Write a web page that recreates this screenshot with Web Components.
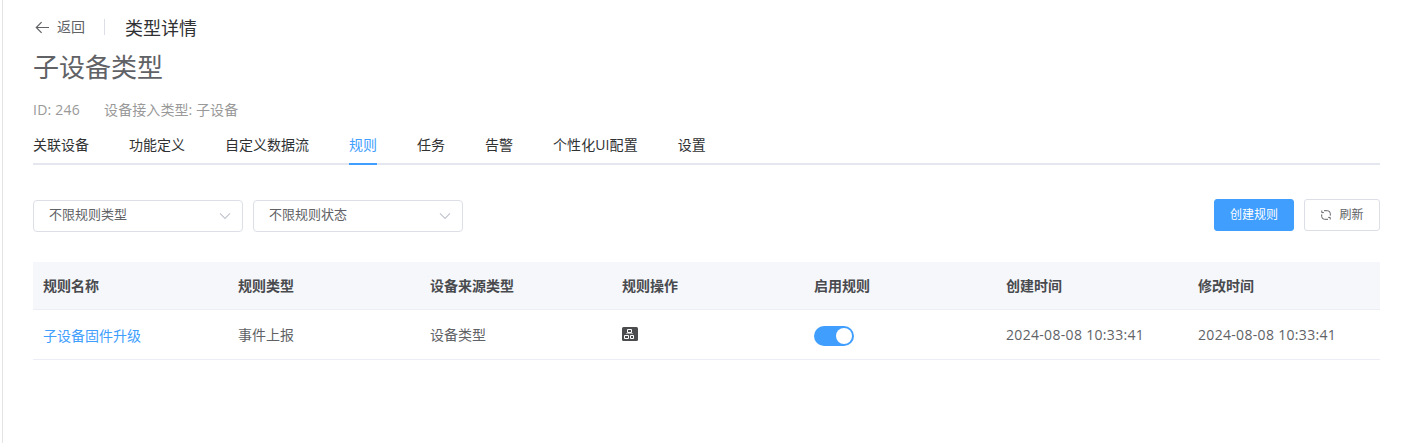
<!DOCTYPE html>
<html lang="zh-CN">
<head>
<meta charset="utf-8">
<title>类型详情</title>
<style>
html,body{margin:0;height:100%;overflow:hidden;background:#fff}
body{font-family:"Open Sans","Noto Sans CJK SC",sans-serif;font-size:14px;color:#606266}
</style>
</head>
<body>
<type-detail></type-detail>
<script>
const define = (name, css, html) => customElements.define(name, class extends HTMLElement {
  constructor() {
    super();
    this.attachShadow({ mode: 'open' }).innerHTML = `<style>*{box-sizing:border-box}:host{box-sizing:border-box;white-space:nowrap}${css}</style>${html}`;
  }
});

define('page-header', `
:host{display:flex;align-items:center;height:24px;line-height:24px}
.back{display:flex;align-items:center;padding-left:2px;height:22px;line-height:22px;margin-bottom:2px}
svg{margin-right:7px;display:block}
i{width:1px;height:16px;background:#dcdfe6;margin:0 20px 2px 19px}
.title{font-size:18px;color:#303133}`,
`<div class="back"><svg width="15" height="14" viewBox="0 0 15 14" fill="none" stroke="#606266" stroke-width="1.2"><path d="M14 7.5H1.5M6.6 2.2 1.3 7.5 6.6 12.8"/></svg><slot name="back"></slot></div><i></i><div class="title"><slot></slot></div>`);

define('tab-bar', `:host{display:flex;gap:40px;height:36px;border-bottom:2px solid #e4e7ed;color:#303133}`, `<slot></slot>`);
define('tab-item', `
:host{display:block;height:36px;line-height:32px;border-bottom:2px solid transparent}
:host([active]){color:#409eff;border-color:#409eff}
:host([latin]){letter-spacing:.1px}`, `<slot></slot>`);

define('select-box', `
:host{display:flex;align-items:center;justify-content:space-between;width:210px;height:32px;border:1px solid #dcdfe6;border-radius:4px;padding:0 11px 0 15px;font-size:13px;line-height:26px}
span{height:30px}`,
`<span><slot></slot></span><svg width="12" height="8" viewBox="0 0 12 8" fill="none" stroke="#c0c4cc" stroke-width="1.1"><path d="m1 1.4 5 5 5-5"/></svg>`);

define('ui-button', `
:host{display:flex;align-items:center;justify-content:center;height:32px;border:1px solid #dcdfe6;border-radius:3px;font-size:12px;line-height:30px;width:76px}
:host([primary]){width:80px;background:#409eff;border-color:#409eff;color:#fff}
span{height:30px}`,
`<slot name="icon"></slot><span><slot></slot></span>`);
define('refresh-icon', `:host{display:block;width:12px;height:12px;margin-right:7px}svg{display:block}`,
`<svg width="12" height="12" viewBox="0 0 12 12" fill="none" stroke="#606266" stroke-width="1"><path d="M4 1.7H7.4Q10.3 1.7 10.3 4.6V6.6M8 10.3H4.6Q1.7 10.3 1.7 7.4V5.4M1.8 1.5V3.6H3.8M10.2 10.5V8.4H8.2"/></svg>`);
define('flow-icon', `:host{display:block;margin-bottom:2px}svg{display:block}`,
`<svg width="16" height="14" viewBox="0 0 16 14"><rect width="16" height="14" rx="1.5" fill="#4b4c4e"/><g fill="none" stroke="#fff"><path d="M5.5 2.5h4v3h-4zM2.5 8.5h4v3h-4zM8.5 8.5h3v3h-3z"/><path d="M4 6.5h7" opacity=".5"/></g></svg>`);
define('toggle-switch', `
:host{display:flex;justify-content:flex-end;align-items:center;width:40px;height:20px;border-radius:10px;background:#409eff;padding-right:2px;margin-top:2px}
i{width:16px;height:16px;border-radius:50%;background:#fff}`, `<i></i>`);

define('table-row', `
:host{display:grid;grid-template-columns:195px repeat(5,192px) 1fr;height:50px;align-items:center;border-bottom:1px solid #ebeef5}
:host([head]){height:48px;background:#f5f7fa;color:#484a4e;font-weight:700}
::slotted(*){padding-left:10px}`, `<slot></slot>`);
define('table-cell', `
:host{display:block;line-height:22px}
:host([link]){color:#409eff;padding-top:2px}
:host([date]){letter-spacing:.32px}`, `<slot></slot>`);

define('type-detail', `
:host{display:block;height:443px;margin-left:2px;border-left:1px solid #e4e4e6;padding:16px 22px 0 30px}
h1{margin:9px 0 0;font-size:26px;line-height:36px;font-weight:400}
.meta{display:flex;gap:24px;margin-top:14px;line-height:22px;color:#999}
.meta span{letter-spacing:.08px}
.meta span:first-child{letter-spacing:.24px}
tab-bar{margin-top:8px}
.tools{display:flex;gap:10px;margin-top:34px;height:33px}
.tools select-box{margin-top:1px}
.space{flex:1}
.table{margin-top:30px}`,
`<page-header><span slot="back">返回</span>类型详情</page-header>
<h1>子设备类型</h1>
<div class="meta"><span>ID: 246</span><span>设备接入类型: 子设备</span></div>
<tab-bar><tab-item>关联设备</tab-item><tab-item>功能定义</tab-item><tab-item>自定义数据流</tab-item><tab-item active>规则</tab-item><tab-item>任务</tab-item><tab-item>告警</tab-item><tab-item latin>个性化UI配置</tab-item><tab-item>设置</tab-item></tab-bar>
<div class="tools"><select-box>不限规则类型</select-box><select-box>不限规则状态</select-box><div class="space"></div><ui-button primary>创建规则</ui-button><ui-button><refresh-icon slot="icon"></refresh-icon>刷新</ui-button></div>
<div class="table">
<table-row head><table-cell>规则名称</table-cell><table-cell>规则类型</table-cell><table-cell>设备来源类型</table-cell><table-cell>规则操作</table-cell><table-cell>启用规则</table-cell><table-cell>创建时间</table-cell><table-cell>修改时间</table-cell></table-row>
<table-row><table-cell link>子设备固件升级</table-cell><table-cell>事件上报</table-cell><table-cell>设备类型</table-cell><table-cell><flow-icon></flow-icon></table-cell><table-cell><toggle-switch></toggle-switch></table-cell><table-cell date>2024-08-08 10:33:41</table-cell><table-cell date>2024-08-08 10:33:41</table-cell></table-row>
</div>`);
</script>
</body>
</html>
